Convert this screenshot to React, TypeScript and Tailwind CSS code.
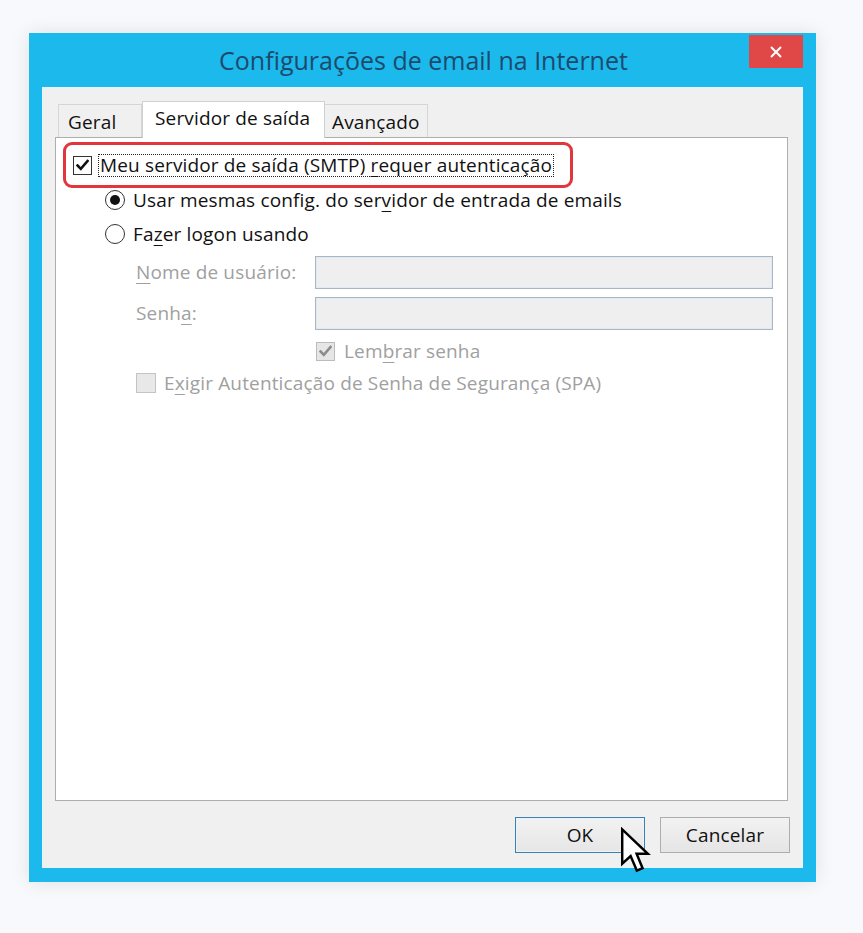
import React from "react";

const Check = ({ color = "#111" }: { color?: string }) => (
  <svg width="13" height="12" viewBox="0 0 13 12">
    <path d="M1.5 6.5 L4.8 9.8 L11.5 2" fill="none" stroke={color} strokeWidth="2.6" strokeLinecap="square" />
  </svg>
);

export default function App() {
  return (
    <div
      className="w-[863px] min-h-[933px] bg-[#f8f9fc] pt-[33px] pl-[29px]"
      style={{ fontFamily: '"Open Sans", "Noto Sans", sans-serif' }}
    >
      <div className="w-[787px] h-[849px] bg-[#1cb9ec] flex flex-col px-[13px] pb-[14px] shadow-[0_0_18px_rgba(0,0,0,0.10)]">
        {/* title bar */}
        <div className="relative h-[54px] flex items-center justify-center">
          <span className="text-[25px] text-[#1d4a6c] leading-none ml-[2px] mt-[1px]">Configurações de email na Internet</span>
          <div className="absolute right-0 top-[2px] w-[54px] h-[33px] bg-[#e04848] flex items-center justify-center">
            <svg width="14" height="14" viewBox="0 0 14 14">
              <path d="M2 2 L12 12 M12 2 L2 12" stroke="#fff" strokeWidth="2" />
            </svg>
          </div>
        </div>
        {/* client */}
        <div className="flex-1 bg-[#f0f0f0] flex flex-col pl-[13px] pr-[15px] pt-[14px] shadow-[inset_0_0_0_1px_#e6f5fb]">
          {/* tabs */}
          <div className="flex items-end h-[36px] pl-[3px] relative z-10 text-[19px] tracking-[0.15px] text-[#111]">
            <div className="w-[84px] h-[33px] border border-b-0 border-[#d6d6d6] bg-[#f0f0f0] pl-[9px] flex items-center pt-[2px]">
              Geral
            </div>
            <div className="w-[183px] h-[37px] -mb-[1px] border border-b-0 border-[#d0d0d0] bg-white pl-[12px] flex items-center pb-[3px]">
              Servidor de saída
            </div>
            <div className="w-[103px] h-[33px] border border-b-0 border-l-0 border-[#d6d6d6] bg-[#f0f0f0] pl-[7px] flex items-center pt-[3px]">
              Avançado
            </div>
          </div>
          {/* panel */}
          <div className="h-[664px] bg-white border border-[#aeaeae] flex flex-col pt-[4px] text-[19px] tracking-[0.15px] text-[#111]">
            <div className="ml-[7px] w-[510px] h-[46px] border-[3px] border-[#e0363c] rounded-[9px] flex items-center pl-[7px]">
              <div className="w-[19px] h-[19px] border border-[#333] bg-white flex items-center justify-center">
                <Check />
              </div>
              <div className="ml-[6px] h-[23px] border border-dotted border-[#222] px-[1px] flex items-center leading-none">
                <span>
                  Meu servidor de saída (SMTP) <span className="underline underline-offset-[4px]">r</span>equer autenticação
                </span>
              </div>
            </div>
            <div className="h-[24px] flex items-center ml-[49px]">
              <div className="w-[20px] h-[20px] rounded-full border border-[#333] bg-white flex items-center justify-center">
                <div className="w-[10px] h-[10px] rounded-full bg-[#111]" />
              </div>
              <span className="ml-[8px]">
                Usar mesmas config. do ser<span className="underline underline-offset-[4px]">v</span>idor de entrada de emails
              </span>
            </div>
            <div className="h-[24px] flex items-center ml-[49px] mt-[10px]">
              <div className="w-[20px] h-[20px] rounded-full border border-[#333] bg-white" />
              <span className="ml-[8px]">
                Fa<span className="underline underline-offset-[4px]">z</span>er logon usando
              </span>
            </div>
            <div className="h-[33px] flex items-center ml-[80px] mt-[10px]">
              <span className="w-[179px] text-[#a0a0a0]">
                <span className="underline underline-offset-[4px]">N</span>ome de usuário:
              </span>
              <div className="w-[458px] h-[33px] bg-[#efefef] border border-[#a8b6c6] shadow-[inset_0_0_0_1px_#dfeaf4]" />
            </div>
            <div className="h-[33px] flex items-center ml-[80px] mt-[8px]">
              <span className="w-[179px] text-[#a0a0a0]">
                Senh<span className="underline underline-offset-[4px]">a</span>:
              </span>
              <div className="w-[458px] h-[33px] bg-[#efefef] border border-[#a8b6c6] shadow-[inset_0_0_0_1px_#dfeaf4]" />
            </div>
            <div className="h-[24px] flex items-center ml-[260px] mt-[9px]">
              <div className="w-[19px] h-[19px] border border-[#bcbcbc] bg-[#e6e6e6] flex items-center justify-center">
                <Check color="#8c8c8c" />
              </div>
              <span className="ml-[9px] text-[#a0a0a0]">
                Lem<span className="underline underline-offset-[4px]">b</span>rar senha
              </span>
            </div>
            <div className="h-[24px] flex items-center ml-[80px] mt-[8px]">
              <div className="w-[20px] h-[20px] border border-[#c4c4c4] bg-[#e8e8e8]" />
              <span className="ml-[8px] text-[#a0a0a0]">
                E<span className="underline underline-offset-[4px]">x</span>igir Autenticação de Senha de Segurança (SPA)
              </span>
            </div>
          </div>
          {/* buttons */}
          <div className="relative flex justify-end gap-[15px] mt-[16px] -mr-[2px] text-[19px] tracking-[0.15px] text-[#111]">
            <div className="w-[130px] h-[36px] border border-[#3c7fb1] bg-gradient-to-b from-[#f2f2f2] to-[#e6e6e6] shadow-[inset_0_0_0_1px_#eaf3fa] flex items-center justify-center">
              OK
            </div>
            <div className="w-[130px] h-[36px] border border-[#adadad] bg-gradient-to-b from-[#f2f2f2] to-[#e5e5e5] flex items-center justify-center">
              Cancelar
            </div>
            <svg
              className="absolute left-[565px] top-[10px]"
              width="31"
              height="48"
              viewBox="0 0 14 21.5"
            >
              <path d="M1 1 L1 16.5 L4.8 13 L7.6 19.6 L10.2 18.5 L7.5 12 L12.6 12 Z" fill="#fff" stroke="#000" strokeWidth="1.1" strokeLinejoin="miter" />
            </svg>
          </div>
        </div>
      </div>
    </div>
  );
}
